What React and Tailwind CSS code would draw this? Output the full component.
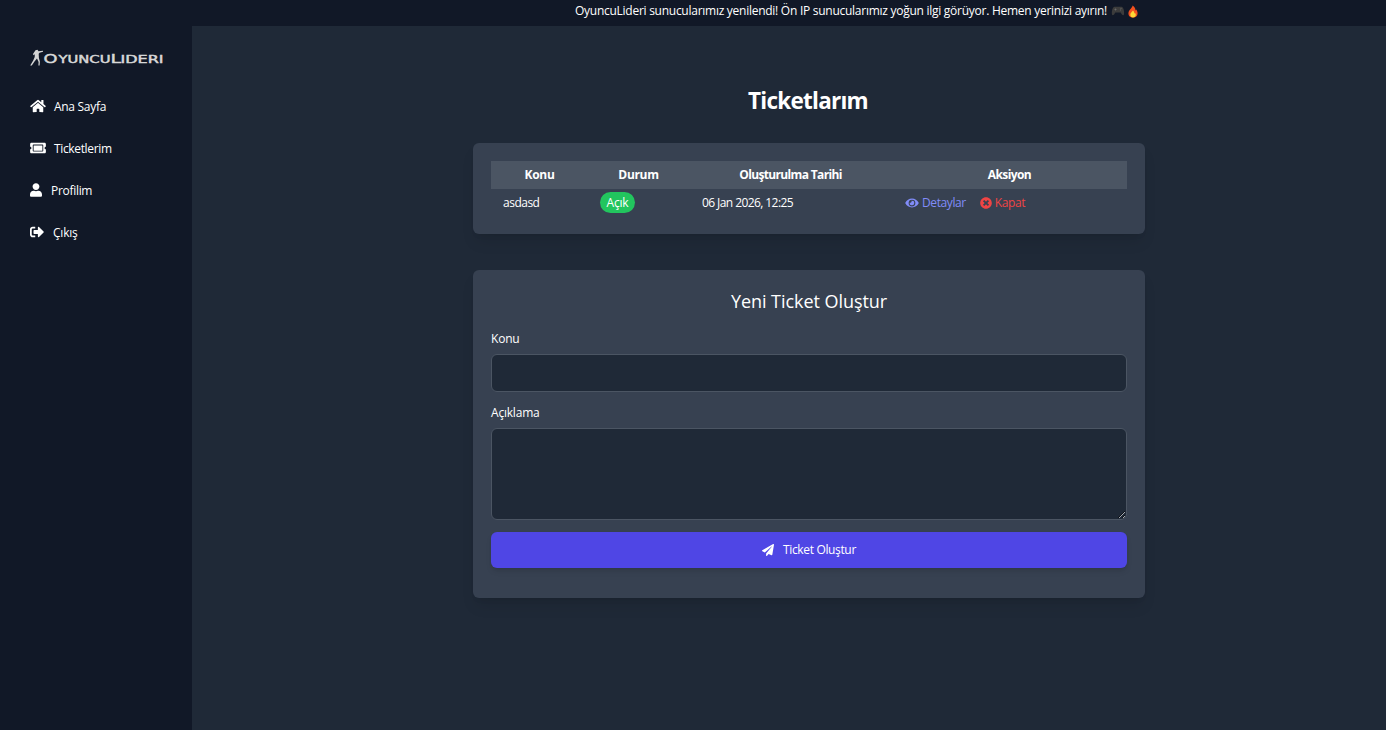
import {
  FaHome,
  FaTicketAlt,
  FaUser,
  FaSignOutAlt,
  FaEye,
  FaTimesCircle,
  FaPaperPlane
} from "react-icons/fa";

const links = [
  { label: "Ana Sayfa", icon: FaHome, size: "w-[16px]", tone: "gap-2 tracking-[-0.3px]" },
  { label: "Ticketlerim", icon: FaTicketAlt, size: "w-[16px]", tone: "gap-2 tracking-[-0.35px]" },
  { label: "Profilim", icon: FaUser, size: "w-[12px]", tone: "gap-[9px] tracking-[-0.3px]" },
  { label: "Çıkış", icon: FaSignOutAlt, size: "w-[14px]", tone: "gap-[9px] tracking-[-0.2px]" }
];

const tickets = [
  { id: 1, subject: "asdasd", status: "Açık", createdAt: "06 Jan 2026, 12:25" }
];

export default function App() {
  return (
    <div className="flex h-[730px] flex-col overflow-hidden bg-[#1f2937] font-['Open_Sans','Noto_Sans',sans-serif] text-[12px] leading-[18px] text-white">
      <div className="h-[26px] shrink-0 bg-[#111827] pl-[575px] pt-[2px] whitespace-nowrap tracking-[-0.265px]">
        OyuncuLideri sunucularımız yenilendi! Ön IP sunucularımız yoğun ilgi görüyor. Hemen yerinizi ayırın!
        <Gamepad />
        <Flame />
      </div>

      <div className="flex min-h-0 flex-1">
        <aside className="w-[192px] shrink-0 bg-[#111827] pl-[30px] pt-[20px]">
          <Logo />
          <nav className="mt-[27px] flex flex-col gap-6">
            {links.map((l) => (
              <a key={l.label} href="#" className={`flex h-[18px] items-center ${l.tone}`}>
                <l.icon className={`h-[14px] ${l.size}`} />
                <span className="relative top-px">{l.label}</span>
              </a>
            ))}
          </nav>
        </aside>

        <main className="flex flex-1 flex-col items-center pl-[40px] pt-[57px]">
          <h1 className="h-[36px] -translate-x-px text-[22.5px] font-bold leading-[36px] tracking-[-0.75px]">Ticketlarım</h1>

          <div className="mt-[24px] h-[91px] w-[672px] rounded-md bg-[#374151] p-[18px] shadow-lg">
            <table className="w-full table-fixed">
              <colgroup>
                <col className="w-[97px]" />
                <col className="w-[101px]" />
                <col className="w-[203px]" />
                <col />
              </colgroup>
              <thead>
                <tr className="h-[28px] bg-[#4b5563] tracking-[-0.3px]">
                  <th>Konu</th>
                  <th>Durum</th>
                  <th className="tracking-[-0.65px]">Oluşturulma Tarihi</th>
                  <th className="tracking-[-0.6px]">Aksiyon</th>
                </tr>
              </thead>
              <tbody>
                {tickets.map((t) => (
                  <tr key={t.id} className="h-[27px] tracking-[-0.5px]">
                    <td className="px-3">{t.subject}</td>
                    <td className="px-3">
                      <span className="flex h-[21px] w-[35px] items-center justify-center rounded-full bg-[#22c55e] tracking-[-0.2px]">
                        {t.status}
                      </span>
                    </td>
                    <td className="pl-[13px] pr-3 tracking-[-0.58px]">{t.createdAt}</td>
                    <td className="pl-[13px] pr-3">
                      <div className="flex items-center tracking-[-0.4px]">
                        <a href="#" className="flex items-center gap-[3px] text-[#818cf8]">
                          <FaEye className="h-[12px] w-[14px]" />
                          Detaylar
                        </a>
                        <a href="#" className="ml-[14px] flex items-center gap-[3px] text-[#ef4444]">
                          <FaTimesCircle className="h-[12px] w-[12px]" />
                          Kapat
                        </a>
                      </div>
                    </td>
                  </tr>
                ))}
              </tbody>
            </table>
          </div>

          <div className="mt-[36px] flex h-[328px] w-[672px] flex-col rounded-md bg-[#374151] px-[18px] pt-[18px] shadow-lg">
            <h2 className="h-[26px] text-center text-[18px] font-medium leading-[26px] tracking-[-0.05px]">
              Yeni Ticket Oluştur
            </h2>
            <label className="mt-[16px] h-[18px] font-medium tracking-[-0.2px]">Konu</label>
            <input
              type="text"
              className="mt-[6px] h-[38px] w-full rounded-md border border-[#4b5563] bg-[#1f2937] px-3"
            />
            <label className="mt-[12px] h-[18px] font-medium tracking-[-0.2px]">Açıklama</label>
            <textarea className="mt-[6px] h-[92px] w-full shrink-0 rounded-md border border-[#4b5563] bg-[#1f2937] px-3" />
            <button className="mt-[12px] flex h-[36px] w-full shrink-0 items-center justify-center gap-[9px] rounded-md bg-[#4f46e5] tracking-[-0.35px] shadow-md">
              <FaPaperPlane className="h-[12px] w-[12px]" />
              Ticket Oluştur
            </button>
          </div>
        </main>
      </div>
    </div>
  );
}

function Logo() {
  return (
    <svg viewBox="0 0 134 24" className="h-[24px] w-[134px]">
      <path
        d="M5.500 4.300l2-.6 1 1.500 4.500-.4v1L9.500 6.700l-.8 1 .2 4.300 1 3.600L9.600 19.500H8.400l.2-3.500L7 12.600 4.500 15.500 1.800 19.500.2 19.500l3-5 1.500-3.500L4.800 8.300 3.500 9.300 3 8z"
        fill="#d4d4d4"
      />
      <g fill="#d8d8d8" stroke="#d8d8d8" strokeWidth=".45" fontFamily="DejaVu Sans">
        <text x="13.500" y="16.500" fontSize="13" textLength="14" lengthAdjust="spacingAndGlyphs">O</text>
        <text x="28.500" y="16.500" fontSize="10.500" textLength="52" lengthAdjust="spacingAndGlyphs">YUNCU</text>
        <text x="80.500" y="16.500" fontSize="13" textLength="10.500" lengthAdjust="spacingAndGlyphs">L</text>
        <text x="90.500" y="16.500" fontSize="10.500" textLength="43" lengthAdjust="spacingAndGlyphs">IDERI</text>
      </g>
    </svg>
  );
}

function Gamepad() {
  return (
    <svg viewBox="0 0 14 12" className="ml-[4px] inline h-[12px] w-[14px] align-[-2px]">
      <path d="M1 9.500C.4 6 1.800 2 3.500 1.800h7C12.200 2 13.600 6 13 9.500c-.6 1.500-2.300.3-3.300-2H4.300c-1 2.300-2.700 3.500-3.300 2z" fill="#3c3c3c" />
      <path d="M3.500 4.500h2M4.500 3.500v2M9.500 3.500h1M9 5h1" stroke="#6b6b6b" strokeWidth=".8" />
    </svg>
  );
}

function Flame() {
  return (
    <svg viewBox="0 0 12 13" className="ml-[2px] inline h-[13px] w-[12px] align-[-3px]">
      <path d="M5.500.5c.3 2-3.500 4-4 7C1 10.500 3 12.500 6 12.500s5-2 4.500-5c-.2-1.300-.8-2-1-3L8.500 5.500C8.500 3.500 7.500 1.500 5.500.5z" fill="#f4511e" />
      <path d="M6 5.500C5 7 3.300 8 3.300 9.800c0 1.700 1.200 2.700 2.700 2.700s2.800-1 2.800-2.700C8.800 8.500 8 8 7.500 8.500 7.300 7.500 7 6.500 6 5.500z" fill="#fdd835" />
    </svg>
  );
}
